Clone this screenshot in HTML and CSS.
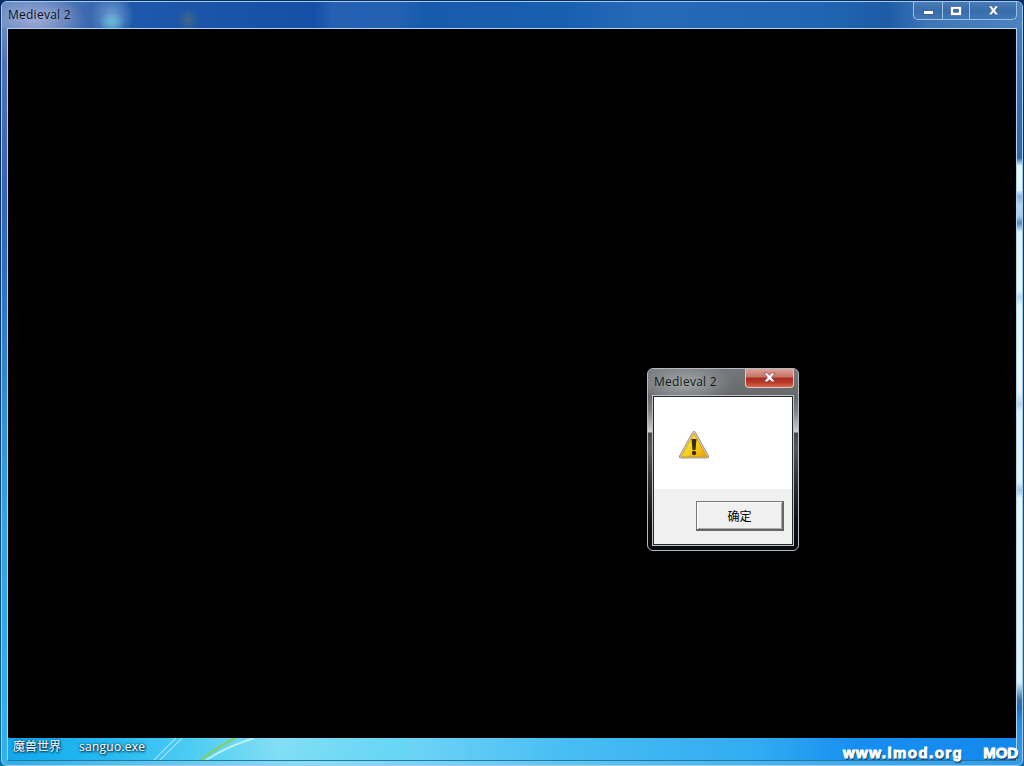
FILE: index.html
```html
<!DOCTYPE html>
<html lang="zh-CN">
<head>
  <meta charset="UTF-8">
  <title>Medieval 2</title>
  <link rel="stylesheet" href="styles.css">
</head>
<body>

  <div class="window">
    <div class="titlebar">
      <span class="title">Medieval 2</span>
      <div class="controls">
        <button class="min"><svg width="13" height="7" viewBox="0 0 13 7"><rect x="1.500" y="1.500" width="10" height="4" fill="#fff" stroke="#46617f"/></svg></button>
        <button class="max"><svg width="12" height="10" viewBox="0 0 12 10"><path fill="#fff" stroke="#46617f" stroke-width=".7" fill-rule="evenodd" d="M.5.5h11v9H.5zM3.500 3.300h5v3h-5z"/></svg></button>
        <button class="close"><svg width="13" height="11" viewBox="0 0 13 11"><path d="M1.500 1h3.200L6.500 3.400 8.300 1h3.200L8.200 5.400l3.300 4.400H8.300L6.500 7.400 4.700 9.800H1.500l3.300-4.400z" fill="#fff" stroke="#46617f" stroke-width=".6"/></svg></button>
      </div>
    </div>

    <div class="client">
      <div class="screen">
        <div class="dialog">
          <div class="dialog-title">
            <span>Medieval 2</span>
            <button class="dialog-close"><svg width="13" height="11" viewBox="0 0 13 11"><path d="M1 1h3.600L6.500 3.400 8.400 1H12L8.500 5.400 12 9.800H8.400L6.500 7.400 4.600 9.800H1l3.500-4.400z" fill="#fff" stroke="#6e3535" stroke-width=".6"/></svg></button>
          </div>
          <div class="dialog-body">
            <div class="message">
              <svg width="32" height="30" viewBox="0 0 32 30">
                <defs>
                  <linearGradient id="warn" x1="0" y1="0" x2="1" y2="1">
                    <stop offset="0" stop-color="#ffe94a"/>
                    <stop offset=".5" stop-color="#f8d51c"/>
                    <stop offset="1" stop-color="#ed9c08"/>
                  </linearGradient>
                </defs>
                <path d="M16 1.500q1 0 1.700 1.200L30.500 26q.8 2-1.200 2H2.700q-2 0-1.200-2L14.300 2.700Q15 1.500 16 1.500z" fill="#d9cfae" stroke="#9c9888"/>
                <path d="M16 3.500L29 26.800H3z" fill="url(#warn)" stroke="#c9961b" stroke-width=".8"/>
                <path d="M13.500 9h5l-1 11h-3z" fill="#34300f"/>
                <circle cx="16" cy="23" r="2.200" fill="#34300f"/>
              </svg>
            </div>
            <div class="actions"><button class="ok">确定</button></div>
          </div>
        </div>
      </div>

      <div class="desktop">
        <svg class="streaks" width="340" height="22" viewBox="0 0 340 22">
          <path d="M146 22L168 0M152 22L174 0" fill="none" stroke="#b5effa" stroke-width="1.200" opacity=".75"/>
          <path d="M193 22Q208 10 227 0" fill="none" stroke="#83cf60" stroke-width="2.200"/>
          <path d="M198 22Q218 9 246 0" fill="none" stroke="#c9f6f1" stroke-width="2" opacity=".85"/>
        </svg>
        <span class="icon-label">魔兽世界</span>
        <span class="icon-label file">sanguo.exe</span>
      </div>
    </div>
  </div>

  <div class="watermark"><span class="site">www.lmod.org</span><span class="mod">MOD</span></div>

</body>
</html>
```
FILE: styles.css
```css
* { box-sizing: border-box; }
body { margin: 0; width: 1024px; height: 766px; padding: 1px 1px 0; overflow: hidden; background: linear-gradient(#092b66, #0d3f86 55%, #0871b2); font-family: "Open Sans", "Noto Sans CJK SC", sans-serif; font-size: 12px; }
button { display: flex; align-items: center; justify-content: center; padding: 0; margin: 0; border: 0; background: none; font: inherit; }
svg { display: block; }

.window {
  height: 765px; padding: 0 5px; border: 1px solid #a3cbec; border-radius: 6px;
  background:
    linear-gradient(#4b80bd 0, #3a6eae 90px, #35679f 156px, #eaf8fd 164px, #e4f5fc 188px, #90b2d6 194px, #bcd4ec 204px, #b0cdea 214px, #5a86b4 221px, #ddf4fa 230px, #e4f8fc 288px, #bbd8ee 295px, #e6f7fb 304px, #edf6f8 390px, #c0d8ec 402px, #e0f4fb 410px, #e2f5fa 480px, #a9c7de 488px, #e4f7fb 496px, #dcf4fa 680px, #3d7096 698px, #2c6fae 706px, #298ce0 720px, #2f9bec) right / 6px 100% no-repeat,
    linear-gradient(#7d9bcc 0, #4c74b5 60px, #3567b3 180px, #2b6fbd 270px, #2f8bd0 380px, #35a3df 520px, #35b0e8 765px) left / 6px 100% no-repeat,
    linear-gradient(90deg, #2baee8, #8adff7 30%, #55c1f3 60%, #2f9bec) bottom / 100% 6px no-repeat,
    #1a58a8;
}
.titlebar {
  display: flex; justify-content: space-between; height: 26px; margin: 0 -5px; padding: 0 5px 0 6px; border-radius: 5px 5px 0 0;
  background:
    radial-gradient(ellipse 13px 10px at 110px 20px, #67b9d8, rgba(90, 160, 210, 0)),
    radial-gradient(ellipse 22px 24px at 110px 14px, rgba(130, 175, 220, .75), rgba(90, 140, 210, 0)),
    radial-gradient(ellipse 11px 13px at 186px 18px, rgba(65, 105, 135, .9), rgba(65, 105, 135, 0)),
    radial-gradient(ellipse 50px 30px at 34px 18px, rgba(180, 185, 222, .75), rgba(120, 150, 205, 0)),
    linear-gradient(90deg, #6286c0 0, #466fb3 70px, #1e58ab 130px, #164fa5 312px, #2560b3 330px, #2360b2 395px, #175bad 422px, #195fb0 560px, #246ab7 640px, #2065b2 820px, #1d5ca6 885px, #3d76b6 925px, #4c82be 100%);
}
.title { height: 26px; line-height: 25px; letter-spacing: .25px; color: #0b1425; text-shadow: 0 0 5px #a9bada; }
.controls { display: flex; height: 18px; border: 1px solid #9ac0e3; border-top: 0; border-radius: 0 0 5px 5px; background: linear-gradient(#4a7cb7, #386dab 50%, #3f77b6); }
.controls .min { width: 28px; padding-top: 4px; }
.controls .max { width: 28px; border: solid #9ac0e3; border-width: 0 1px; }
.controls .close { width: 46px; }

.client { display: flex; flex-direction: column; height: 733px; border: 1px solid #a9d5f2; border-bottom-color: #2a7899; }
.screen { display: flex; flex: 1; align-items: flex-start; padding: 339px 0 0 639px; background: #000; }

.dialog { width: 152px; height: 183px; padding: 0 5px; border: 1px solid #b5babf; border-radius: 6px; background: linear-gradient(#74777b 0, #67696c 28px, #808285 42px, #d0d2d4 63px, #46484a 64px, #54565a 80px, #303236 110px, #0c0e12 155px, #07090e 100%); }
.dialog-title { display: flex; justify-content: space-between; height: 27px; margin: 0 -1px 0 -5px; padding-left: 6px; line-height: 26px; letter-spacing: .25px; color: #142014; border-radius: 5px 0 0 0; background: radial-gradient(ellipse 50px 22px at 36px 14px, #a3a6a8, rgba(112, 115, 118, 0)); }
.dialog-close { width: 49px; height: 19px; border: 1px solid #e0c4c0; border-top: 0; border-radius: 0 0 4px 4px; background: linear-gradient(#dda39a 0, #c87064 45%, #a92b1d 50%, #b93b28 75%, #d9664c 100%); }
.dialog-close svg { margin-top: -2px; }
.dialog-body { height: 149px; border: 1px solid #25282b; box-shadow: 0 0 0 1px #bfc1c2; background: #f0f0f0; }
.message { height: 92px; padding: 33px 0 0 24px; background: #fff; }
.actions { display: flex; justify-content: flex-end; padding: 12px 8px 0; }
.ok { width: 88px; height: 30px; border: 1px solid #777; border-right: 2px solid #666; border-bottom: 2px solid #666; background: #f0f0f0; box-shadow: inset 1px 1px #fff, inset -1px -1px #aaa; color: #000; }

.desktop { display: flex; position: relative; gap: 18px; height: 22px; padding-left: 5px; line-height: 17px; background: linear-gradient(165deg, transparent 40%, rgba(80, 218, 242, .35)) 0 0 / 400px 100% no-repeat, linear-gradient(90deg, #13a8ee 0, #25b9f2 100px, #51cdf3 190px, #8adff5 270px, #70d5f6 390px, #47bdf3 560px, #32abf2 750px, #168ef0 850px, #1388ed 100%); }
.streaks { position: absolute; left: 0; top: 0; }
.icon-label { position: relative; color: #fff; text-shadow: 1px 1px 2px #00243f, 0 0 3px #00243f; }
.file { letter-spacing: .25px; }

.watermark { position: absolute; left: 843px; top: 744px; display: flex; gap: 20px; color: #fff; font: bold 15px/18px "Liberation Sans", sans-serif; -webkit-text-stroke: .9px #fff; text-shadow: 1px 2px 1px #173d67; }
.site { letter-spacing: 1.45px; }
```
